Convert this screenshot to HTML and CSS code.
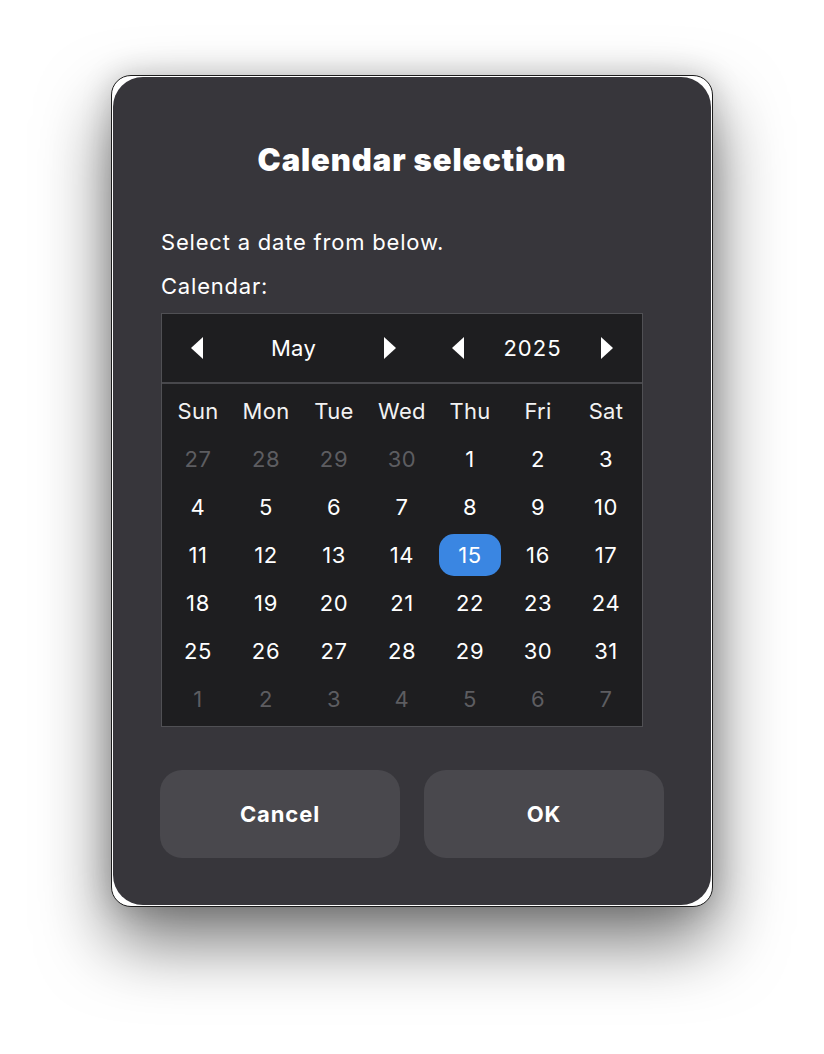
FILE: index.html
```html
<!DOCTYPE html>
<html>
<head>
<meta charset="utf-8">
<link rel="stylesheet" href="styles.css">
</head>
<body>
<div class="stage">
  <div class="window">
    <div class="panel">
      <h1 class="title">Calendar selection</h1>
      <p class="line">Select a date from below.</p>
      <p class="line">Calendar:</p>
      <div class="calendar">
        <div class="cal-head">
          <span class="arrow"><svg width="12" height="22" viewBox="0 0 12 22"><path d="M12 0 L0 11 L12 22 Z" fill="#fff"/></svg></span>
          <span class="label month">May</span>
          <span class="arrow"><svg width="12" height="22" viewBox="0 0 12 22"><path d="M0 0 L12 11 L0 22 Z" fill="#fff"/></svg></span>
          <span class="arrow arrow-gap"><svg width="12" height="22" viewBox="0 0 12 22"><path d="M12 0 L0 11 L12 22 Z" fill="#fff"/></svg></span>
          <span class="label year">2025</span>
          <span class="arrow"><svg width="12" height="22" viewBox="0 0 12 22"><path d="M0 0 L12 11 L0 22 Z" fill="#fff"/></svg></span>
        </div>
        <div class="grid">
          <span class="wd">Sun</span><span class="wd">Mon</span><span class="wd">Tue</span><span class="wd">Wed</span><span class="wd">Thu</span><span class="wd">Fri</span><span class="wd">Sat</span>
          <span class="d other">27</span><span class="d other">28</span><span class="d other">29</span><span class="d other">30</span><span class="d">1</span><span class="d">2</span><span class="d">3</span>
          <span class="d">4</span><span class="d">5</span><span class="d">6</span><span class="d">7</span><span class="d">8</span><span class="d">9</span><span class="d">10</span>
          <span class="d">11</span><span class="d">12</span><span class="d">13</span><span class="d">14</span><span class="d"><span class="sel">15</span></span><span class="d">16</span><span class="d">17</span>
          <span class="d">18</span><span class="d">19</span><span class="d">20</span><span class="d">21</span><span class="d">22</span><span class="d">23</span><span class="d">24</span>
          <span class="d">25</span><span class="d">26</span><span class="d">27</span><span class="d">28</span><span class="d">29</span><span class="d">30</span><span class="d">31</span>
          <span class="d other">1</span><span class="d other">2</span><span class="d other">3</span><span class="d other">4</span><span class="d other">5</span><span class="d other">6</span><span class="d other">7</span>
        </div>
      </div>
      <div class="buttons">
        <button class="btn">Cancel</button>
        <button class="btn">OK</button>
      </div>
    </div>
  </div>
</div>
</body>
</html>
```
FILE: styles.css
```css
* { box-sizing: border-box; }
html, body { margin: 0; padding: 0; }
body {
  background: #ffffff;
  font-family: Inter, "Noto Sans", sans-serif;
  width: 824px;
  height: 1054px;
  overflow: hidden;
}
.stage {
  display: flex;
  justify-content: center;
  padding-top: 75px;
}
.window {
  width: 602px;
  height: 832px;
  border: 1px solid #1c1c1c;
  border-radius: 20px;
  background: #ffffff;
  padding: 1px;
  box-shadow: 0 34px 70px rgba(0,0,0,0.55), 0 0 30px rgba(0,0,0,0.18);
}
.panel {
  height: 100%;
  background: #37363b;
  border-radius: 30px;
  padding: 63px 47px 0 47px;
  display: flex;
  flex-direction: column;
  color: #ffffff;
}
.title {
  margin: 0 0 40px 0;
  text-align: center;
  font-size: 31px;
  line-height: 40px;
  font-weight: 900;
  letter-spacing: 0.9px;
}
.line {
  margin: 0;
  font-size: 22px;
  line-height: 44px;
  padding-left: 1px;
  letter-spacing: 0.8px;
}
.calendar {
  margin-top: 5px;
  margin-left: 1px;
  width: 482px;
  background: #1e1e20;
  border: 1px solid #505054;
}
.cal-head {
  height: 70px;
  display: flex;
  align-items: center;
  padding-left: 5px;
  border-bottom: 2px solid #48484c;
}
.arrow {
  width: 60px;
  display: flex;
  justify-content: center;
  align-items: center;
}
.arrow svg { display: block; }
.arrow-gap { margin-left: 8px; }
.label {
  text-align: center;
  font-size: 22px;
}
.month { width: 133px; letter-spacing: 0.3px; }
.year { width: 89px; letter-spacing: 1px; }
.grid {
  display: grid;
  grid-template-columns: repeat(7, 68px);
  grid-auto-rows: 48px;
  padding: 3px 0 3px 2px;
}
.wd, .d {
  display: flex;
  justify-content: center;
  align-items: center;
  font-size: 22px;
}
.wd { color: #f2f2f2; letter-spacing: 0.3px; }
.d { letter-spacing: 0.6px; }
.other { color: #5d5d61; }
.sel {
  width: 62px;
  height: 42px;
  border-radius: 15px;
  background: #3a86e2;
  display: flex;
  justify-content: center;
  align-items: center;
}
.buttons {
  margin-top: 43px;
  display: flex;
  gap: 24px;
}
.btn {
  flex: 1;
  height: 88px;
  border: none;
  border-radius: 22px;
  background: #49484d;
  color: #ffffff;
  font-family: Inter, "Noto Sans", sans-serif;
  font-size: 22px;
  font-weight: 700;
  letter-spacing: 0.9px;
}
```
